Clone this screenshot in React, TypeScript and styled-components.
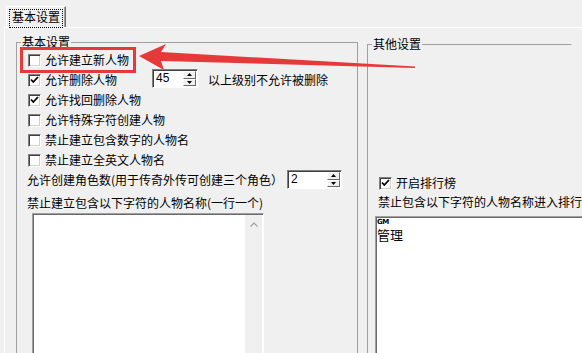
import styled, { createGlobalStyle } from "styled-components";

const GlobalStyle = createGlobalStyle`
  html, body {
    margin: 0;
    height: 353px;
    overflow: hidden;
    background: #f0f0f0;
  }
  body {
    font-family: "Noto Sans CJK SC", "Liberation Sans", sans-serif;
    font-size: 12px;
    color: #000;
  }
`;

const Window = styled.div`
  position: relative;
  box-sizing: border-box;
  width: 582px;
  height: 353px;
  padding: 6px 0 0 4px;
  overflow: hidden;
`;

const TabStrip = styled.div`
  display: flex;
  height: 21px;
  padding-left: 2px;
`;

const Tab = styled.div`
  box-sizing: border-box;
  width: 60px;
  height: 21px;
  padding-top: 3px;
  display: flex;
  justify-content: center;
  border-top: 1px solid #fff;
  border-left: 1px solid #fff;
  border-right: 1px solid #696969;
  box-shadow: inset -1px 0 #a0a0a0;
`;

const TabText = styled.span`
  line-height: 14px;
  padding: 0 2px;
  outline: 1px dotted #000;
`;

const Panel = styled.div`
  display: flex;
  align-items: flex-start;
  gap: 9px;
  padding: 7px 0 0 11px;
  border-top: 1px solid #fff;
  border-left: 1px solid #fff;
`;

const Group = styled.fieldset<{ $w: number; $top?: number; $open?: boolean }>`
  box-sizing: border-box;
  width: ${(p) => p.$w}px;
  min-width: 0;
  height: 340px;
  margin: ${(p) => p.$top ?? 0}px 0 0;
  padding: 0;
  border: 1px solid #a0a0a0;
  ${(p) => (p.$open ? "border-right-color: transparent;" : "")}
`;

const Legend = styled.legend`
  margin-left: 4px;
  padding: 0 1px;
  font-size: 12px;
  line-height: 14px;
`;

const GroupBody = styled.div<{ $pt: number }>`
  display: flex;
  flex-direction: column;
  padding: ${(p) => p.$pt}px 0 0 10px;
  white-space: nowrap;
`;

const Row = styled.div<{ $h?: number; $mt?: number }>`
  display: flex;
  align-items: center;
  height: ${(p) => p.$h ?? 20}px;
  margin-top: ${(p) => p.$mt ?? 0}px;
  line-height: 14px;
`;

const Box = styled.span`
  box-sizing: border-box;
  flex: none;
  width: 13px;
  height: 13px;
  margin: 0 4px 0 1px;
  display: flex;
  align-items: center;
  justify-content: center;
  background: #fff;
  border: 1px solid;
  border-color: #808080 #fff #fff #808080;
  box-shadow: inset 1px 1px #404040, inset -1px -1px #d4d0c8;
`;

const Spin = styled.div<{ $w: number; $ml: number; $mt?: number }>`
  box-sizing: border-box;
  flex: none;
  display: flex;
  width: ${(p) => p.$w}px;
  height: 19px;
  margin-left: ${(p) => p.$ml}px;
  margin-top: ${(p) => p.$mt ?? 0}px;
  padding: 1px;
  background: #fff;
  border: 1px solid;
  border-color: #808080 #fff #fff #808080;
  box-shadow: inset 1px 1px #404040;
`;

const SpinValue = styled.span`
  flex: 1;
  padding-left: 2px;
  font-family: "Liberation Sans", sans-serif;
  font-size: 12px;
  line-height: 15px;
`;

const SpinButtons = styled.div`
  display: flex;
  flex-direction: column;
  width: 13px;
`;

const SpinButton = styled.div`
  box-sizing: border-box;
  flex: 1;
  display: flex;
  align-items: center;
  justify-content: center;
  background: #f0f0f0;
  border: 1px solid;
  border-color: #fff #696969 #696969 #fff;
`;

const After = styled.span<{ $ml: number }>`
  margin-left: ${(p) => p.$ml}px;
`;

const Memo = styled.div<{ $w: number; $ml: number; $mt?: number }>`
  box-sizing: border-box;
  display: flex;
  width: ${(p) => p.$w}px;
  height: 150px;
  margin-left: ${(p) => p.$ml}px;
  margin-top: ${(p) => p.$mt ?? 0}px;
  background: #fff;
  border: 1px solid;
  border-color: #a0a0a0 #fff #fff #a0a0a0;
  box-shadow: inset 1px 1px #696969;
`;

const MemoText = styled.div`
  flex: 1;
  padding: 1px 0 0 1px;
`;

const Tiny = styled.div`
  font-family: "DejaVu Sans", sans-serif;
  font-weight: bold;
  font-size: 7px;
  line-height: 9px;
  letter-spacing: -0.5px;
`;

const MemoLine = styled.div`
  font-size: 13px;
  line-height: 15px;
`;

const ScrollTrack = styled.div`
  width: 17px;
  margin: 1px 1px 0 0;
  background: #f0f0f0;
  display: flex;
  justify-content: center;
  padding-top: 7px;
  box-sizing: border-box;
`;

const Callout = styled.div`
  position: absolute;
  left: 20px;
  top: 47px;
  width: 116px;
  height: 26px;
  box-sizing: border-box;
  border: 3px solid #e63a3a;
  pointer-events: none;
`;

const ArrowLayer = styled.svg`
  position: absolute;
  left: 0;
  top: 0;
  pointer-events: none;
`;

function Check({ checked }: { checked?: boolean }) {
  return (
    <Box>
      {checked && (
        <svg width="9" height="8" viewBox="0 0 9 8">
          <polyline points="1,3.5 3.3,6 8,1" fill="none" stroke="#000" strokeWidth="1.8" />
        </svg>
      )}
    </Box>
  );
}

function Spinner({ value, w, ml, mt }: { value: string; w: number; ml: number; mt?: number }) {
  return (
    <Spin $w={w} $ml={ml} $mt={mt}>
      <SpinValue>{value}</SpinValue>
      <SpinButtons>
        <SpinButton>
          <svg width="5" height="3" viewBox="0 0 5 3">
            <polygon points="2.5,0 5,3 0,3" fill="#000" />
          </svg>
        </SpinButton>
        <SpinButton>
          <svg width="5" height="3" viewBox="0 0 5 3">
            <polygon points="0,0 5,0 2.5,3" fill="#000" />
          </svg>
        </SpinButton>
      </SpinButtons>
    </Spin>
  );
}

const options = [
  { label: "允许找回删除人物", checked: true },
  { label: "允许特殊字符创建人物", checked: false },
  { label: "禁止建立包含数字的人物名", checked: false },
  { label: "禁止建立全英文人物名", checked: false },
];

export default function App() {
  return (
    <Window>
      <GlobalStyle />
      <TabStrip>
        <Tab>
          <TabText>基本设置</TabText>
        </Tab>
      </TabStrip>
      <Panel>
        <Group $w={342}>
          <Legend>基本设置</Legend>
          <GroupBody $pt={1}>
            <Row>
              <Check />
              允许建立新人物
            </Row>
            <Row>
              <Check checked />
              允许删除人物
              <Spinner value="45" w={46} ml={35} mt={-3} />
              <After $ml={10}>以上级别不允许被删除</After>
            </Row>
            {options.map((o) => (
              <Row key={o.label}>
                <Check checked={o.checked} />
                {o.label}
              </Row>
            ))}
            <Row>
              允许创建角色数(用于传奇外传可创建三个角色）
              <Spinner value="2" w={55} ml={4} mt={-1} />
            </Row>
            <Row $mt={3}>禁止建立包含以下字符的人物名称(一行一个)</Row>
            <Memo $w={232} $ml={5}>
              <MemoText />
              <ScrollTrack>
                <svg width="8" height="5" viewBox="0 0 8 5">
                  <polyline points="0.5,4.5 4,1 7.5,4.5" fill="none" stroke="#a0a0a0" strokeWidth="1.2" />
                </svg>
              </ScrollTrack>
            </Memo>
          </GroupBody>
        </Group>
        <Group $w={205} $top={2} $open>
          <Legend>其他设置</Legend>
          <GroupBody $pt={122}>
            <Row>
              <Check checked />
              开启排行榜
            </Row>
            <Row $h={18}>禁止包含以下字符的人物名称进入排行榜</Row>
            <Memo $w={230} $ml={-3} $mt={5}>
              <MemoText>
                <Tiny>GM</Tiny>
                <MemoLine>管理</MemoLine>
              </MemoText>
            </Memo>
          </GroupBody>
        </Group>
      </Panel>
      <Callout />
      <ArrowLayer width="582" height="353" viewBox="0 0 582 353">
        <polygon
          points="139,56 166,44 161,52 415,66.5 415,68 161,61 164,70"
          fill="#e63a3a"
        />
      </ArrowLayer>
    </Window>
  );
}
